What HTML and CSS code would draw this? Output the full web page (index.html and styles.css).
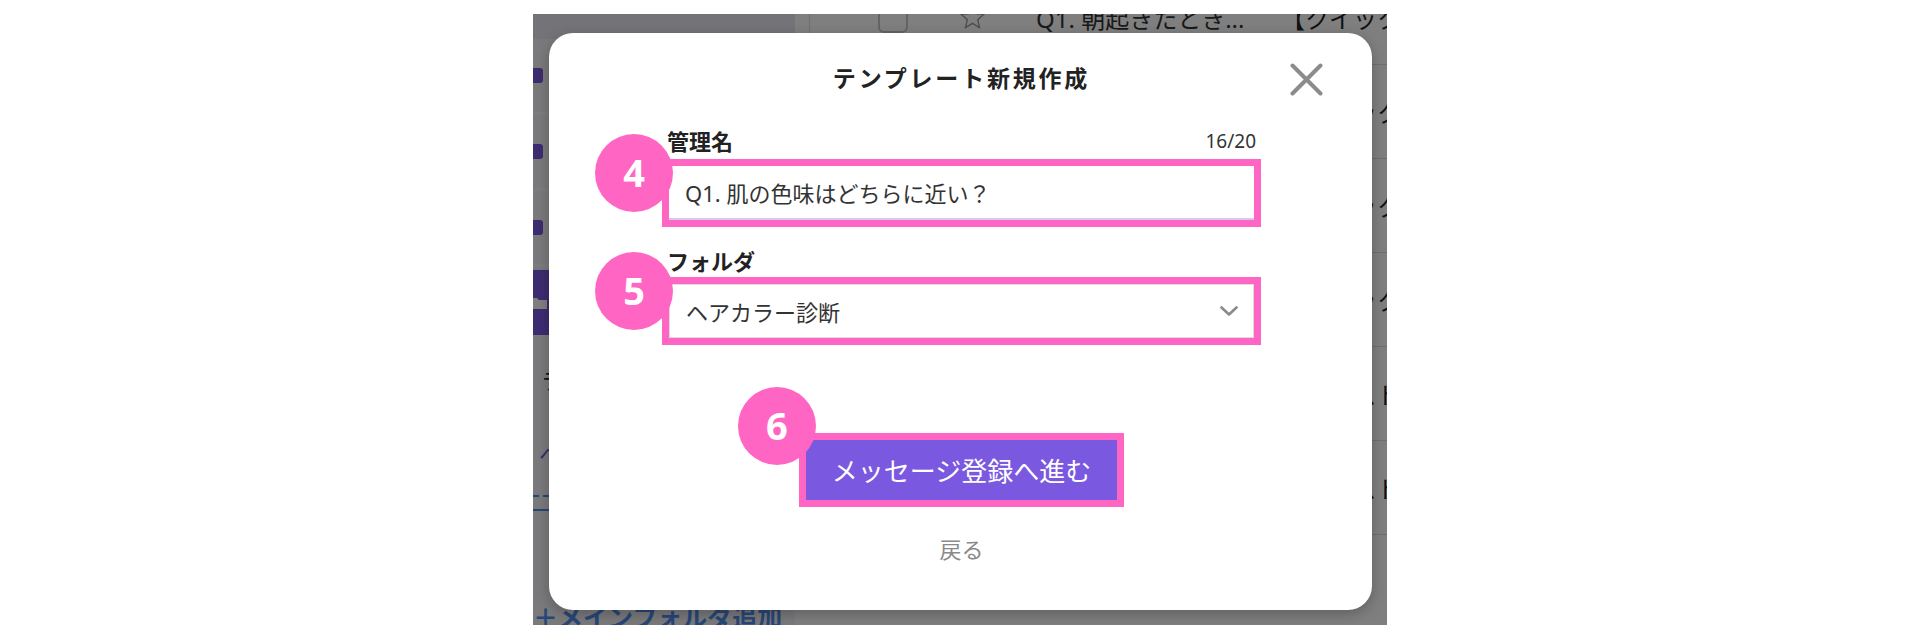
FILE: index.html
```html
<!DOCTYPE html>
<html lang="ja">
<head>
  <meta charset="UTF-8" />
  <title>テンプレート新規作成</title>
  <link rel="stylesheet" href="styles.css">
</head>
<body>
  <div class="shot">
    <!-- app behind the dialog -->
    <div class="app">
      <aside class="sidebar">
        <div class="side-head"></div>
        <div class="side-item"><span class="side-icon"></span></div>
        <div class="side-item"><span class="side-icon"></span></div>
        <div class="side-item"><span class="side-icon"></span></div>
        <div class="side-item active">
          <svg class="side-folder" width="16" height="14" viewBox="0 0 16 14">
            <path d="M0 2h6l2 2h8v9H0z" fill="#fff"/>
          </svg>
        </div>
        <div class="side-label">ラベル管理</div>
        <div class="side-folder-name">ヘアカラー診断</div>
        <div class="side-dash"></div>
        <div class="side-rule"></div>
        <div class="add-folder">＋メインフォルダ追加</div>
      </aside>

      <main class="list">
        <div class="row">
          <div class="c-check"><span class="cb"></span></div>
          <svg class="star" width="27" height="27" viewBox="0 0 24 24">
            <path d="M12 2l2.9 6.6 7.1.6-5.4 4.7 1.6 7-6.2-3.7-6.2 3.7 1.6-7L2 9.2l7.1-.6z" fill="none" stroke="#9a9a9a" stroke-width="1.2"/>
          </svg>
          <div class="c-title">Q1. 朝起きたとき...</div>
          <div class="c-type">【クイックリプライ】</div>
        </div>
        <div class="row">
          <div class="c-check"><span class="cb"></span></div>
          <svg class="star" width="27" height="27" viewBox="0 0 24 24">
            <path d="M12 2l2.9 6.6 7.1.6-5.4 4.7 1.6 7-6.2-3.7-6.2 3.7 1.6-7L2 9.2l7.1-.6z" fill="none" stroke="#9a9a9a" stroke-width="1.2"/>
          </svg>
          <div class="c-title"></div>
          <div class="c-type">【クイックリプライ】</div>
        </div>
        <div class="row">
          <div class="c-check"><span class="cb"></span></div>
          <svg class="star" width="27" height="27" viewBox="0 0 24 24">
            <path d="M12 2l2.9 6.6 7.1.6-5.4 4.7 1.6 7-6.2-3.7-6.2 3.7 1.6-7L2 9.2l7.1-.6z" fill="none" stroke="#9a9a9a" stroke-width="1.2"/>
          </svg>
          <div class="c-title"></div>
          <div class="c-type">【クイックリプライ】</div>
        </div>
        <div class="row">
          <div class="c-check"><span class="cb"></span></div>
          <svg class="star" width="27" height="27" viewBox="0 0 24 24">
            <path d="M12 2l2.9 6.6 7.1.6-5.4 4.7 1.6 7-6.2-3.7-6.2 3.7 1.6-7L2 9.2l7.1-.6z" fill="none" stroke="#9a9a9a" stroke-width="1.2"/>
          </svg>
          <div class="c-title"></div>
          <div class="c-type">【クイックリプライ】</div>
        </div>
        <div class="row">
          <div class="c-check"><span class="cb"></span></div>
          <svg class="star" width="27" height="27" viewBox="0 0 24 24">
            <path d="M12 2l2.9 6.6 7.1.6-5.4 4.7 1.6 7-6.2-3.7-6.2 3.7 1.6-7L2 9.2l7.1-.6z" fill="none" stroke="#9a9a9a" stroke-width="1.2"/>
          </svg>
          <div class="c-title"></div>
          <div class="c-type">【テキスト】</div>
        </div>
        <div class="row">
          <div class="c-check"><span class="cb"></span></div>
          <svg class="star" width="27" height="27" viewBox="0 0 24 24">
            <path d="M12 2l2.9 6.6 7.1.6-5.4 4.7 1.6 7-6.2-3.7-6.2 3.7 1.6-7L2 9.2l7.1-.6z" fill="none" stroke="#9a9a9a" stroke-width="1.2"/>
          </svg>
          <div class="c-title"></div>
          <div class="c-type">【テキスト】</div>
        </div>
      </main>
    </div>

    <!-- dialog -->
    <div class="overlay">
      <div class="modal">
        <h1 class="modal-title">テンプレート新規作成</h1>
        <svg class="close" width="33" height="33" viewBox="0 0 33 33">
          <path d="M2.5 2.5L30.5 30.5M30.5 2.5L2.5 30.5" stroke="#8c8c8c" stroke-width="4" stroke-linecap="round"/>
        </svg>

        <div class="field">
          <div class="field-head">
            <span class="field-label">管理名</span>
            <span class="counter">16/20</span>
          </div>
          <div class="hl">
            <span class="step">4</span>
            <input class="text-input" type="text" value="Q1. 肌の色味はどちらに近い？">
          </div>
        </div>

        <div class="field field-folder">
          <div class="field-head">
            <span class="field-label">フォルダ</span>
          </div>
          <div class="hl">
            <span class="step">5</span>
            <div class="select">
              <span>ヘアカラー診断</span>
              <svg width="18" height="10" viewBox="0 0 18 10">
                <path d="M1.5 1.5L9 8.5L16.5 1.5" fill="none" stroke="#8a8a8a" stroke-width="2.6" stroke-linecap="round" stroke-linejoin="round"/>
              </svg>
            </div>
          </div>
        </div>

        <div class="actions">
          <div class="hl btn-hl">
            <span class="step step-btn">6</span>
            <button class="btn-primary">メッセージ登録へ進む</button>
          </div>
          <div class="back">戻る</div>
        </div>
      </div>
    </div>
  </div>
</body>
</html>
```

FILE: styles.css
```css
/* GLOBAL */
body {
  margin: 0;
  background: #fff;
  font-family: "Noto Sans", "Noto Sans CJK JP", sans-serif;
  color: #222;
}

/* cropped screenshot area */
.shot {
  position: relative;
  width: 854px;
  height: 611px;
  margin: 14px 0 0 533px;
  overflow: hidden;
}

.app {
  display: flex;
  height: 100%;
  background: #fff;
}

/* SIDEBAR (behind overlay) */
.sidebar {
  width: 262px;
  flex: none;
  display: flex;
  flex-direction: column;
  background: #f4f4f8;
}
.side-head {
  height: 25px;
  background: #e8e8f0;
}
.side-item {
  height: 76px;
  box-sizing: border-box;
  border-bottom: 3px solid #fafafd;
  display: flex;
  align-items: center;
}
.side-icon {
  width: 10px;
  height: 15px;
  border-radius: 0 3px 3px 0;
  background: #7a58e0;
}
.side-item.active {
  height: 65px;
  margin-top: 3px;
  background: #7a58e0;
  border: 0;
}
.side-folder {
  margin-left: -2px;
}
.side-label {
  margin: 32px 0 0 8px;
  font-size: 22px;
  line-height: 26px;
  white-space: nowrap;
  color: #222;
}
.side-folder-name {
  margin: 48px 0 0 6px;
  font-size: 22px;
  line-height: 26px;
  white-space: nowrap;
  color: #7a58e0;
}
.side-dash {
  width: 16px;
  margin-top: 28px;
  border-top: 2px dashed #4f8ef0;
}
.side-rule {
  margin-top: 12px;
  border-top: 2px solid #4f8ef0;
}
.add-folder {
  margin-top: auto;
  margin-bottom: -9px;
  font-size: 25px;
  font-weight: 700;
  line-height: 34px;
  white-space: nowrap;
  color: #4f8ef0;
}

/* LIST (behind overlay) */
.list {
  flex: 1;
  margin-top: -43px;
}
.row {
  height: 94px;
  box-sizing: border-box;
  border-bottom: 1px solid #dedede;
  padding-left: 14px;
  display: flex;
  align-items: center;
  white-space: nowrap;
}
.c-check {
  flex: none;
  width: 69px;
  align-self: stretch;
  border-left: 1px solid #dedede;
}
.cb {
  display: block;
  box-sizing: border-box;
  width: 30px;
  height: 30px;
  margin: 32px 0 0 68px;
  border: 2px solid #c8c8c8;
  border-radius: 6px;
}
.star {
  flex: none;
  margin-left: 80px;
}
.c-title {
  flex: none;
  width: 245px;
  margin-left: 50px;
  font-size: 24px;
  color: #333;
}
.c-type {
  flex: none;
  font-size: 24px;
  color: #222;
}

/* OVERLAY + MODAL */
.overlay {
  position: absolute;
  inset: 0;
  background: rgba(0, 0, 0, 0.5);
  display: flex;
  align-items: flex-start;
  padding: 19px 0 0 16px;
}
.modal {
  position: relative;
  width: 823px;
  box-sizing: border-box;
  padding: 27px 111px 46px 113px;
  background: #fff;
  border-radius: 24px;
  box-shadow: 0 4px 14px rgba(0, 0, 0, 0.25);
}
.modal-title {
  margin: 0;
  text-align: center;
  font-size: 23px;
  font-weight: 700;
  line-height: 36px;
  letter-spacing: 2.8px;
  color: #222;
}
.close {
  position: absolute;
  top: 30px;
  right: 49px;
}

.field {
  margin-top: 30px;
}
.field-folder {
  margin-top: 19px;
}
.field-head {
  display: flex;
  justify-content: space-between;
  align-items: center;
  height: 30px;
  padding: 0 5px;
  margin-bottom: 3px;
  line-height: 30px;
}
.field-folder .field-head {
  margin-bottom: 1px;
}
.field-label {
  font-size: 22px;
  font-weight: 700;
  color: #222;
}
.counter {
  font-size: 19px;
  color: #333;
}

/* pink highlight frame */
.hl {
  position: relative;
  border: 7px solid #ff66c4;
}
.step {
  position: absolute;
  left: -74px;
  top: -32px;
  width: 78px;
  height: 78px;
  border-radius: 50%;
  background: #ff66c4;
  color: #fff;
  font-size: 38px;
  font-weight: 700;
  line-height: 1;
  display: flex;
  align-items: center;
  justify-content: center;
  padding-bottom: 2px;
  box-sizing: border-box;
  z-index: 1;
}

.text-input {
  display: block;
  width: 100%;
  height: 54px;
  box-sizing: border-box;
  margin: 0;
  padding: 0 16px;
  border: 0;
  border-bottom: 2px solid #d6c8f5;
  outline: none;
  background: #fff;
  font-family: inherit;
  font-size: 22px;
  color: #333;
}
.select {
  height: 54px;
  box-sizing: border-box;
  padding: 0 15px 0 16px;
  border: 1px solid #dcdcdc;
  display: flex;
  align-items: center;
  justify-content: space-between;
  font-size: 22px;
  color: #333;
  background: #fff;
}

.actions {
  margin-top: 88px;
  display: flex;
  flex-direction: column;
  align-items: center;
}
.step-btn {
  left: -68px;
  top: -53px;
}
.btn-primary {
  display: block;
  height: 60px;
  margin: 0;
  padding: 0 26px;
  border: 0;
  background: #7a58e0;
  color: #fff;
  font-family: inherit;
  font-size: 26px;
  cursor: pointer;
}
.back {
  margin-top: 27px;
  font-size: 22px;
  line-height: 30px;
  color: #8a8a8a;
}
```
